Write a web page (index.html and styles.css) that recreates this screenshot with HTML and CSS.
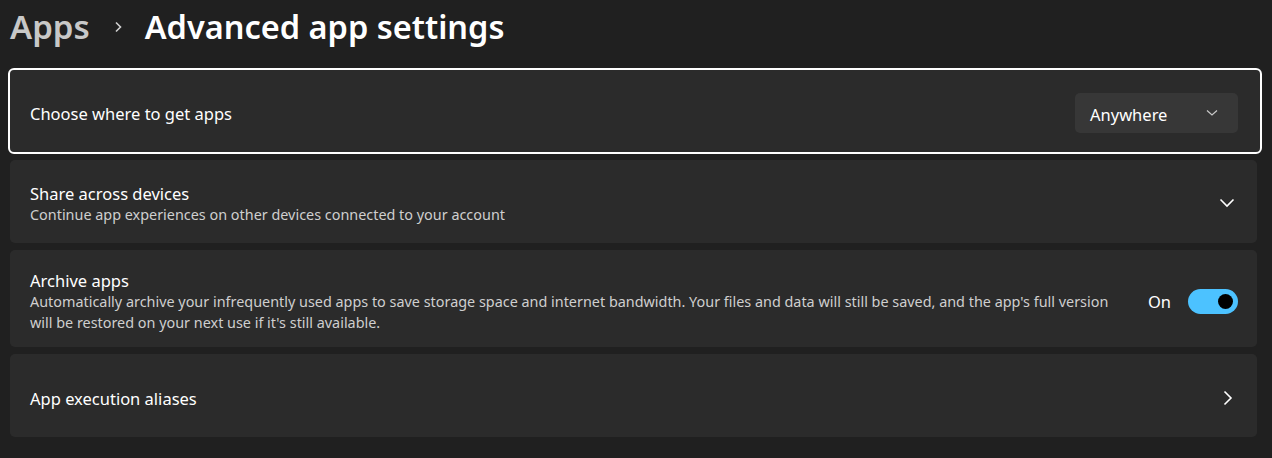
FILE: index.html
```html
<!DOCTYPE html>
<html lang="en">
<head>
<meta charset="utf-8">
<title>Advanced app settings</title>
<link rel="stylesheet" href="styles.css">
</head>
<body>
<div class="page">
  <header class="header">
    <span class="crumb">Apps</span>
    <svg class="crumb-sep" width="10" height="14" viewBox="0 0 10 14"><path d="M3 2.5 L7.5 7 L3 11.5" fill="none" stroke="#d0d0d0" stroke-width="1.6"/></svg>
    <h1 class="title">Advanced app settings</h1>
  </header>

  <div class="cards">
    <div class="card card-focus h82">
      <div class="card-text">
        <div class="card-title">Choose where to get apps</div>
      </div>
      <div class="dropdown">
        <span>Anywhere</span>
        <svg width="12" height="8" viewBox="0 0 12 8"><path d="M1 1.5 L6 6 L11 1.5" fill="none" stroke="#c8c8c8" stroke-width="1.2"/></svg>
      </div>
    </div>

    <div class="card h83">
      <div class="card-text">
        <div class="card-title">Share across devices</div>
        <div class="card-desc">Continue app experiences on other devices connected to your account</div>
      </div>
      <svg class="chev-down" width="16" height="10" viewBox="0 0 16 10"><path d="M1.5 1.5 L8 8 L14.5 1.5" fill="none" stroke="#ffffff" stroke-width="1.6"/></svg>
    </div>

    <div class="card h97">
      <div class="card-text">
        <div class="card-title">Archive apps</div>
        <div class="card-desc">Automatically archive your infrequently used apps to save storage space and internet bandwidth. Your files and data will still be saved, and the app's full version<br>will be restored on your next use if it's still available.</div>
      </div>
      <div class="toggle-wrap">
        <span class="toggle-label">On</span>
        <span class="toggle"><span class="knob"></span></span>
      </div>
    </div>

    <div class="card h83">
      <div class="card-text">
        <div class="card-title">App execution aliases</div>
      </div>
      <svg class="chev-right" width="10" height="16" viewBox="0 0 10 16"><path d="M1.5 1.5 L8 8 L1.5 14.5" fill="none" stroke="#ffffff" stroke-width="1.6"/></svg>
    </div>
  </div>
</div>
</body>
</html>
```
FILE: styles.css
```css
html, body {
  margin: 0;
  padding: 0;
  background: #202020;
}
body {
  font-family: "Noto Sans", "Open Sans", sans-serif;
  color: #ffffff;
  width: 1272px;
  height: 458px;
  overflow: hidden;
}
.page {
  padding: 0 12px 0 10px;
}
.header {
  display: flex;
  align-items: center;
  height: 54px;
}
.crumb {
  font-size: 33px;
  font-weight: 600;
  color: #c8c8c8;
  line-height: 54px;
}
.crumb-sep {
  margin: 0 22px 0 23px;
}
.title {
  margin: 0;
  font-size: 32.5px;
  font-weight: 600;
  color: #ffffff;
  line-height: 54px;
}
.cards {
  display: flex;
  flex-direction: column;
  gap: 7px;
  margin-top: 16px;
}
.card {
  display: flex;
  align-items: center;
  background: #2b2b2b;
  border-radius: 5px;
  padding: 0 22px 0 20px;
  margin-right: 3px;
  box-sizing: border-box;
}
.card-focus {
  margin-right: 0;
  outline: 2px solid #ffffff;
  outline-offset: 0;
  border-radius: 4px;
  margin-bottom: 1px;
}
.h82 { height: 82px; }
.h83 { height: 83px; }
.h97 { height: 97px; padding-right: 19px; }
.card-text {
  flex: 1;
  min-width: 0;
  padding-top: 6px;
}
.card-title {
  font-size: 16.5px;
  line-height: 20px;
  color: #ffffff;
}
.card-desc {
  font-size: 14.4px;
  line-height: 21px;
  color: #cfcfcf;
}
.dropdown {
  width: 163px;
  height: 40px;
  box-sizing: border-box;
  background: #373737;
  border-radius: 5px;
  display: flex;
  align-items: center;
  justify-content: space-between;
  padding: 0 20px 0 15px;
  font-size: 16.5px;
  color: #ffffff;
  margin-top: 4px;
}
.dropdown span {
  padding-top: 2px;
}
.chev-down { margin-top: 2px; }
.chev-right { margin-right: 2px; margin-top: 4px; }
.toggle-wrap {
  display: flex;
  align-items: center;
  gap: 17px;
  margin-left: 30px;
  margin-top: 6px;
}
.toggle-label {
  font-size: 16.5px;
  color: #ffffff;
}
.toggle {
  width: 50px;
  height: 25px;
  border-radius: 13px;
  background: #4cc2ff;
  display: flex;
  align-items: center;
  justify-content: flex-end;
  padding-right: 5px;
  box-sizing: border-box;
}
.knob {
  width: 15px;
  height: 15px;
  border-radius: 50%;
  background: #000000;
}
```
